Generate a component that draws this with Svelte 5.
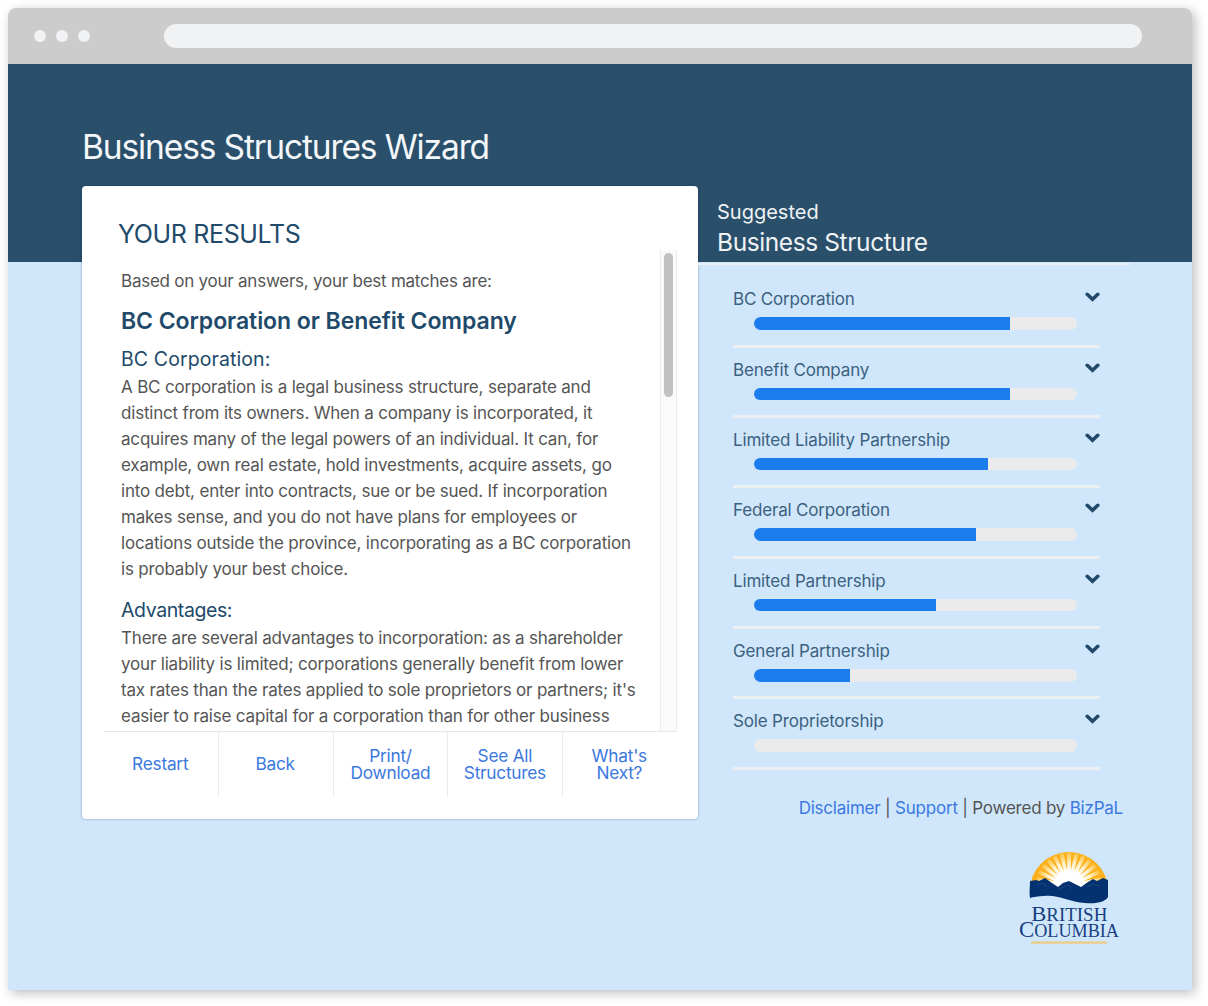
<script>
  const intro = [
    'A BC corporation is a legal business structure, separate and',
    'distinct from its owners. When a company is incorporated, it',
    'acquires many of the legal powers of an individual. It can, for',
    'example, own real estate, hold investments, acquire assets, go',
    'into debt, enter into contracts, sue or be sued. If incorporation',
    'makes sense, and you do not have plans for employees or',
    'locations outside the province, incorporating as a BC corporation',
    'is probably your best choice.'
  ];
  const advantages = [
    'There are several advantages to incorporation: as a shareholder',
    'your liability is limited; corporations generally benefit from lower',
    "tax rates than the rates applied to sole proprietors or partners; it's",
    'easier to raise capital for a corporation than for other business'
  ];
  const actions = [['Restart'], ['Back'], ['Print/', 'Download'], ['See All', 'Structures'], ["What's", 'Next?']];
  const structures = [
    { name: 'BC Corporation', score: 79 },
    { name: 'Benefit Company', score: 79 },
    { name: 'Limited Liability Partnership', score: 72.2 },
    { name: 'Federal Corporation', score: 68.6 },
    { name: 'Limited Partnership', score: 56.2 },
    { name: 'General Partnership', score: 29.6 },
    { name: 'Sole Proprietorship', score: 0 }
  ];
  const rays = [-78, -65, -52, -39, -26, -13, 0, 13, 26, 39, 52, 65, 78];
</script>

<div class="window">
  <div class="chrome">
    <div class="dots"><i></i><i></i><i></i></div>
    <div class="address"></div>
  </div>
  <div class="page">
    <h1>Business Structures Wizard</h1>
    <div class="columns">
      <section class="card">
        <h2>YOUR RESULTS</h2>
        <div class="scroller">
          <div class="copy">
            <p class="lead">Based on your answers, your best matches are:</p>
            <h3>BC Corporation or Benefit Company</h3>
            <h4>BC Corporation:</h4>
            <p>{#each intro as line}<span>{line}</span>{/each}</p>
            <h4 class="second">Advantages:</h4>
            <p>{#each advantages as line}<span>{line}</span>{/each}</p>
          </div>
          <div class="track"><div class="thumb"></div></div>
        </div>
        <div class="actions">
          {#each actions as lines}
            <button>{#each lines as line}<span>{line}</span>{/each}</button>
          {/each}
        </div>
      </section>

      <aside>
        <header>
          <div class="small">Suggested</div>
          <div class="large">Business Structure</div>
        </header>
        <div class="list">
          {#each structures as s}
            <div class="row">
              <div class="label">
                <span>{s.name}</span>
                <svg width="15" height="10" viewBox="0 0 15 10"><path d="M2.2 2.3 L7.5 7.3 L12.8 2.3" /></svg>
              </div>
              <div class="meter"><div class="fill" style="width: {s.score}%"></div></div>
            </div>
          {/each}
        </div>
        <footer><a>Disclaimer</a> | <a>Support</a> | Powered by <a>BizPaL</a></footer>
        <svg class="logo" width="104" height="96" viewBox="0 0 104 96">
          <defs>
            <clipPath id="sun"><path d="M13 40 A39 38 0 0 1 91 40 Z" /></clipPath>
            <radialGradient id="glow" gradientUnits="userSpaceOnUse" cx="52" cy="36" r="36">
              <stop offset="0.4" stop-color="#fff" />
              <stop offset="0.65" stop-color="#fff3cf" stop-opacity="0.95" />
              <stop offset="1" stop-color="#ffdc7a" stop-opacity="0.3" />
            </radialGradient>
          </defs>
          <g clip-path="url(#sun)">
            <rect x="12" y="0" width="80" height="42" fill="#fbb01c" />
            {#each rays as a}
              <path d="M50.4 36 L50 3 L54 3 L53.6 36 Z" fill="url(#glow)" transform="rotate({a} 52 36)" />
            {/each}
            <circle cx="52" cy="36" r="16" fill="#fff" />
          </g>
          <path d="M13 31 L19 30 L22 31 L28 28 L35 33 L41 37 L46 33 L52 31 L58 34 L64 37 L71 32 L76 29 L80 31 L86 28 L91 30 V47 C88 52 80 54 68 53 C52 52 40 44 27 46 C21 46 16 47 13 48 C12 43 13 36 13 31 Z" fill="#04316f" />
          <path d="M20 35 L25 33 L30 37 M42 39 L51 35 L55 39 M70 37 L76 34 L82 36" fill="none" stroke="#1c4685" stroke-width="1" />
          <text x="14.3" y="70.5" textLength="76" lengthAdjust="spacingAndGlyphs"><tspan font-size="21.5">B</tspan><tspan font-size="18">RITISH</tspan></text>
          <text x="2" y="87" textLength="100" lengthAdjust="spacingAndGlyphs"><tspan font-size="22.5">C</tspan><tspan font-size="18">OLUMBIA</tspan></text>
          <rect x="14" y="91.5" width="76" height="2.2" fill="#edcb80" />
        </svg>
      </aside>
    </div>
  </div>
</div>

<style>
  :global(body) { display: flow-root; min-height: 100vh; margin: 0; background: #fff; }
  .window {
    box-sizing: border-box; width: 1184px; height: 982px; margin: 8px;
    border-radius: 8px 8px 0 0; overflow: hidden;
    box-shadow: 3px 3px 12px rgba(0, 0, 0, 0.27);
    font-family: Inter, "Liberation Sans", sans-serif;
  }
  .chrome { height: 56px; background: #ccc; display: flex; align-items: center; }
  .dots { display: flex; gap: 10px; width: 130px; padding-left: 26px; }
  .dots i { width: 12px; height: 12px; border-radius: 50%; background: #f1f2f4; }
  .address { width: 978px; height: 24px; border-radius: 12px; background: #f1f2f4; }
  .page {
    box-sizing: border-box; height: 926px; padding: 60px 0 0 74px;
    background: linear-gradient(#2a4f6b 198px, #d0e7fb 198px);
  }
  h1, h2, h3, h4, p { margin: 0; font-weight: 400; white-space: nowrap; }
  h1 { font-size: 33.5px; line-height: 46px; height: 62px; color: #f4f7f9; letter-spacing: -1.12px; }
  .columns { display: flex; }
  .card {
    box-sizing: border-box; width: 616px; height: 633px; padding: 30px 21px 0 22px;
    background: #fff; border-radius: 4px; box-shadow: 0 0 3px rgba(0, 40, 80, 0.38);
  }
  h2 { padding-left: 14px; font-size: 25px; line-height: 36px; height: 34px; color: #214a6a; letter-spacing: -0.35px; }
  .scroller { display: flex; justify-content: space-between; height: 481px; border-bottom: 1px solid #e8e8e8; }
  .copy { padding: 18px 0 0 17px; height: 463px; overflow: hidden; }
  .copy p { color: #555; font-size: 17px; line-height: 26px; letter-spacing: -0.19px; }
  .copy .lead { letter-spacing: -0.24px; }
  .copy p span { display: block; }
  h3 { margin-top: 11px; font-size: 23px; line-height: 32px; font-weight: 600; color: #214a6a; letter-spacing: -0.06px; }
  h4 { margin-top: 7px; font-size: 19.5px; line-height: 30px; height: 30px; color: #214a6a; letter-spacing: 0.1px; }
  h4.second { margin-top: 13px; letter-spacing: -0.4px; }
  .track { box-sizing: border-box; width: 17px; background: #fafafa; border: solid #ececec; border-width: 0 1px; padding: 3px 3px 0; }
  .thumb { height: 144px; width: 9px; border-radius: 5px; background: #c1c1c1; }
  .actions { display: grid; grid-template-columns: repeat(5, 1fr); height: 65px; margin-right: 1px; }
  button {
    border: 0; border-left: 1px solid #ebebeb; background: none; padding: 0 0 1px 0; font: inherit;
    font-size: 17.3px; line-height: 17.5px; letter-spacing: -0.25px; color: #3b78e0;
  }
  button:first-child { border-color: transparent; padding-right: 3px; }
  button:nth-child(2) { padding-right: 2px; }
  button:nth-child(-n + 2) { padding-bottom: 2px; }
  button span { display: block; }
  aside { width: 432px; display: flex; flex-direction: column; }
  header { box-sizing: border-box; height: 79px; padding: 12px 0 0 19px; color: #f0f3f5; border-bottom: 2px solid #e9f1f8; white-space: nowrap; }
  .small { font-size: 20px; line-height: 28px; letter-spacing: 0; }
  .large { font-size: 24.5px; line-height: 32px; letter-spacing: -0.4px; }
  .list { width: 367px; margin-left: 35px; }
  .row { box-sizing: border-box; height: 70.4px; border-bottom: 3px solid #edf0f2; padding-top: 9px; }
  .row:first-child { height: 82.5px; padding-top: 21px; }
  .label { display: flex; justify-content: space-between; align-items: center; height: 26px; font-size: 17px; line-height: 26px; color: #3b6180; letter-spacing: -0.17px; white-space: nowrap; }
  .label svg { margin-bottom: 4px; }
  .label path { fill: none; stroke: #23496a; stroke-width: 3.6; stroke-linecap: round; stroke-linejoin: miter; }
  .meter { width: 323px; height: 12.5px; margin: 5px 0 0 21.4px; border-radius: 6.5px; overflow: hidden; background: #ebebeb; }
  .fill { height: 100%; background: #1b7ced; }
  footer { margin: 25px 7px 0 0; text-align: right; font-size: 17px; line-height: 26px; letter-spacing: -0.22px; color: #555; white-space: nowrap; }
  footer a { color: #3b78e0; }
  .logo { margin: 29px 0 0 318.5px; }
  .logo text { font-family: "Liberation Serif", serif; fill: #173f80; }
</style>
